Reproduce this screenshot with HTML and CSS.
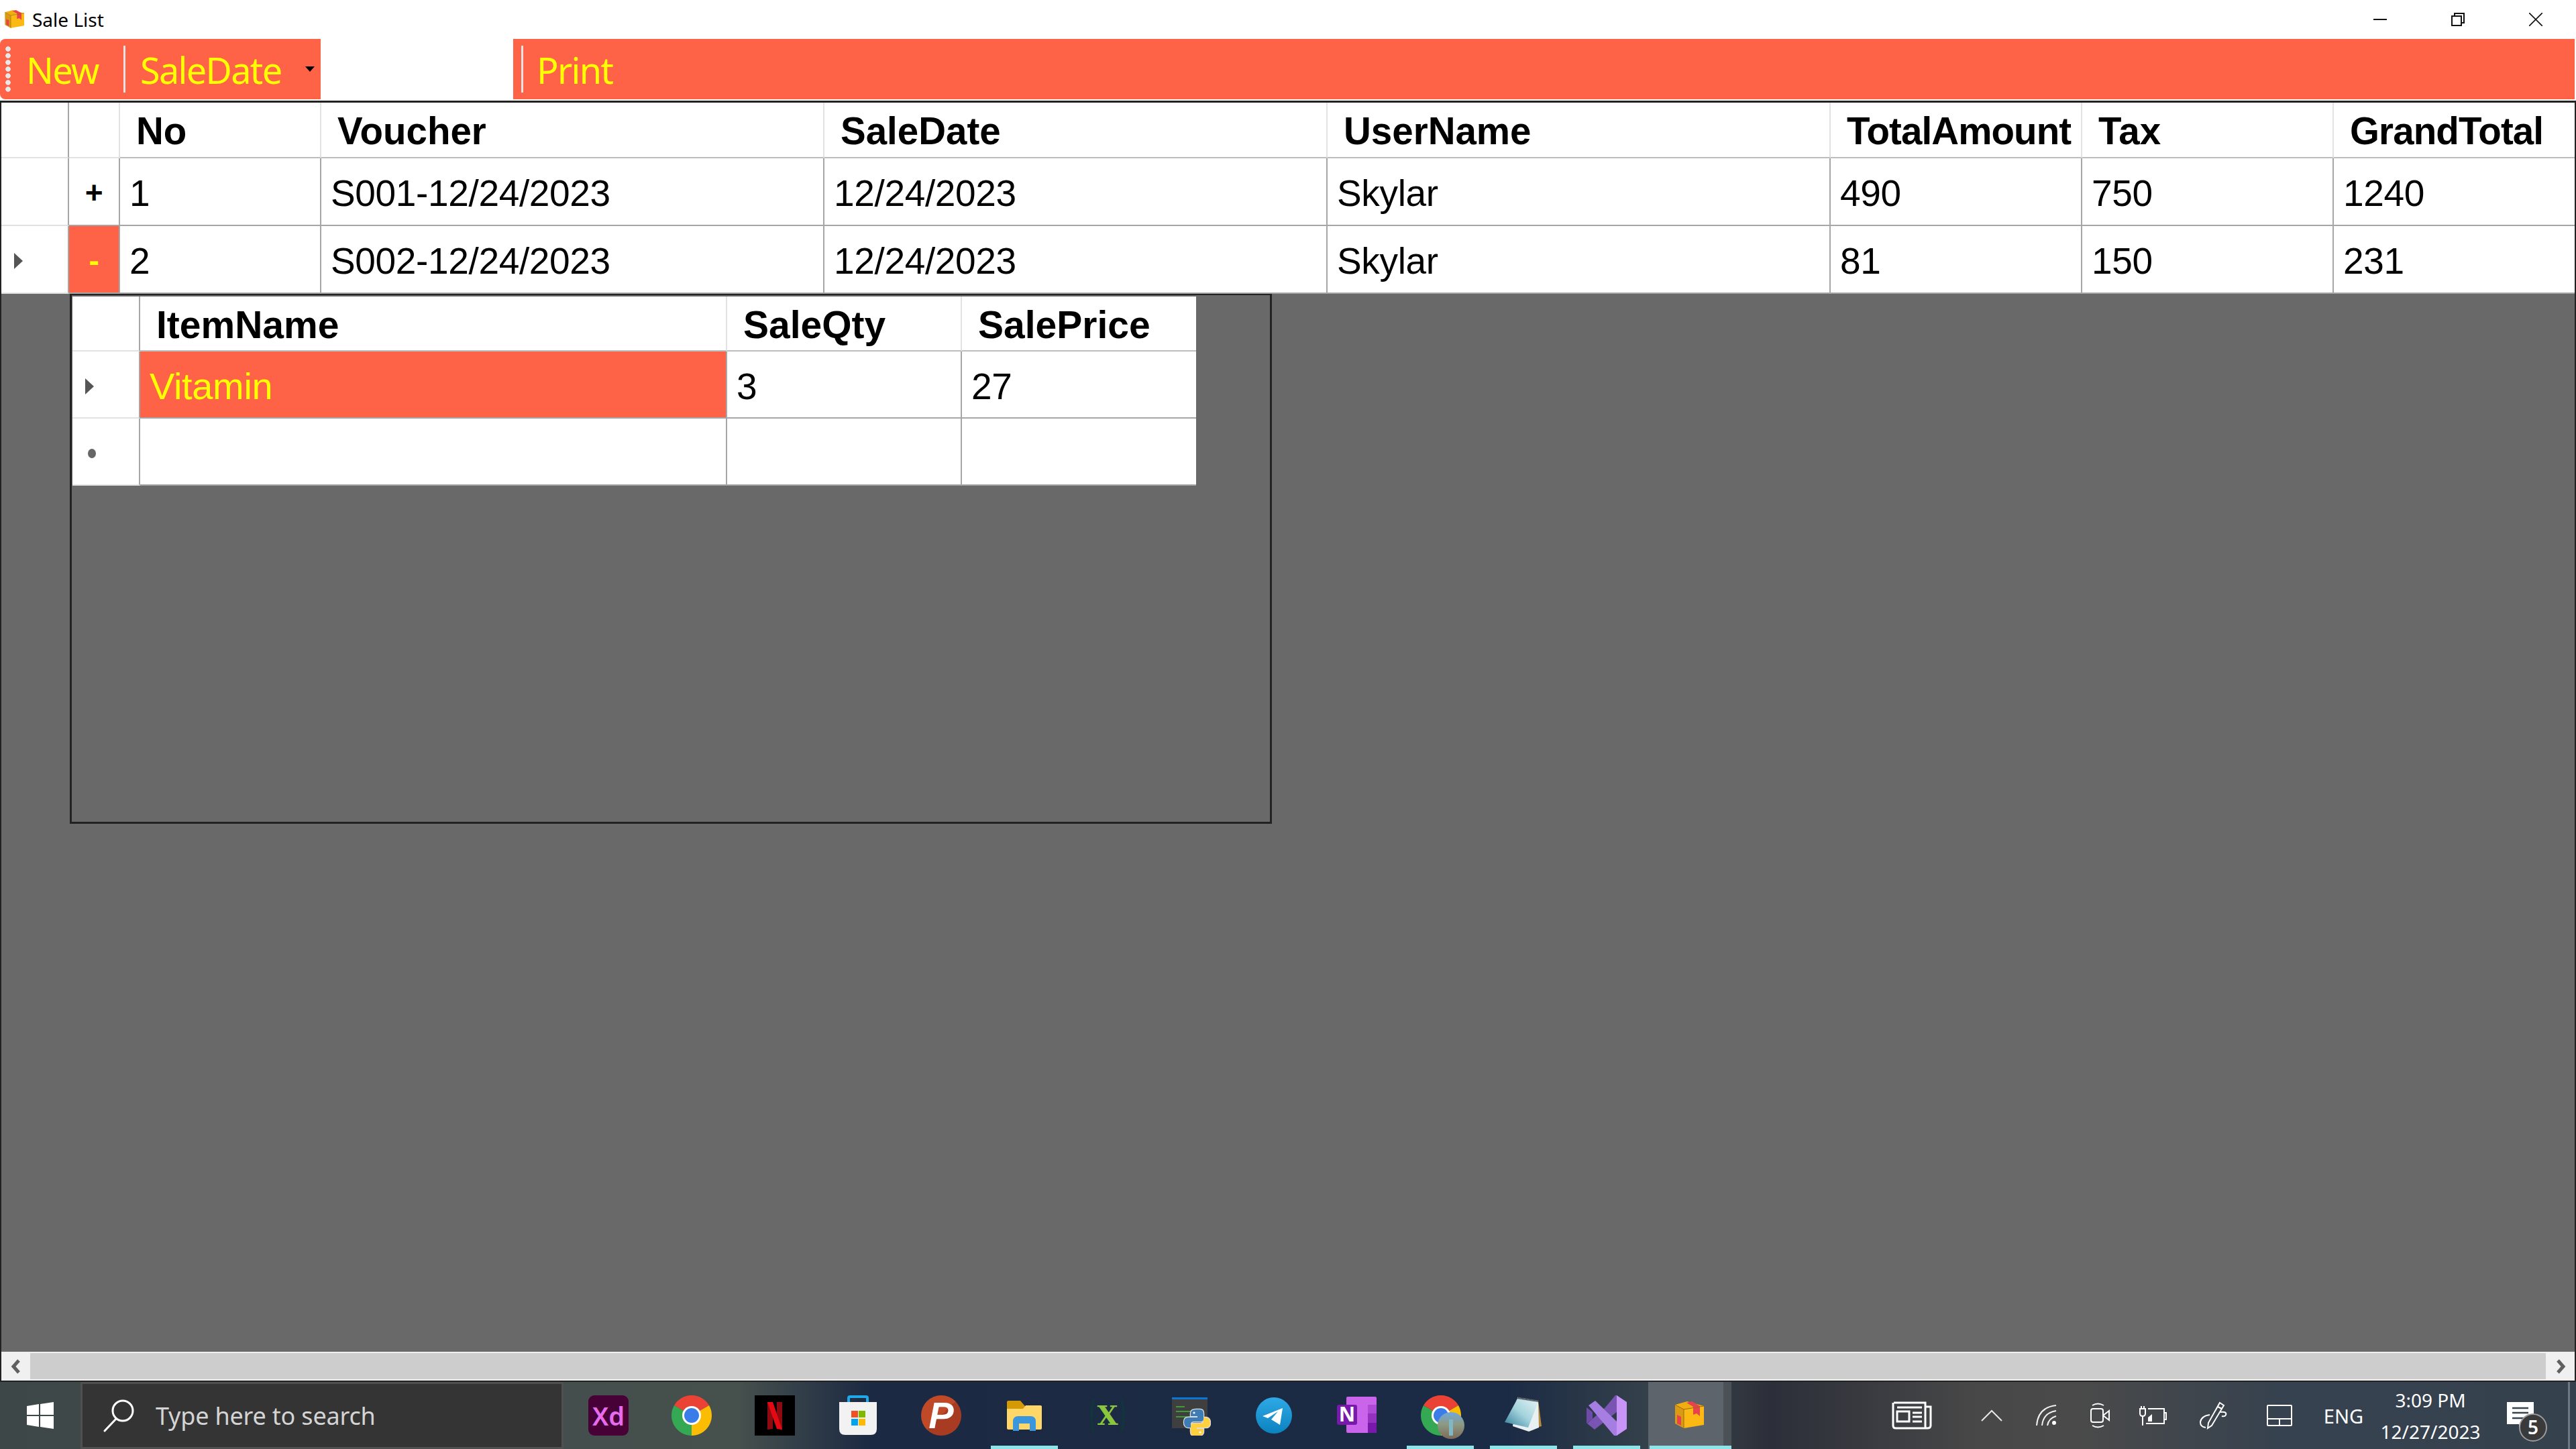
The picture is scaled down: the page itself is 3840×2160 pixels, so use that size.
FILE: index.html
```html
<!DOCTYPE html>
<html lang="en">

<head>
  <meta charset="UTF-8">
  <meta name="viewport" content="width=device-width, initial-scale=1.0">
  <title>Sale List</title>
  <link rel="stylesheet" href="styles.css">
</head>

<body>
  <svg class="defs" width="0" height="0" xmlns="http://www.w3.org/2000/svg">
    <symbol id="box-icon" viewBox="0 0 44 42">
      <path d="M0 5L13 12V40L0 33Z" fill="#d99a14" />
      <path d="M13 12L43 7V35L13 40Z" fill="#fdb913" />
      <path d="M0 5L18 0L43 7L13 12Z" fill="#f2ae10" />
      <path d="M17 2L25 0L37 7V22L32 18L27 20V8Z" fill="#e8434a" />
      <path d="M3 20L9 23V36L3 33Z" fill="#e8434a" />
      <path d="M0 5L13 12V40M13 12L43 7" stroke="#9a6a10" stroke-width="1" fill="none" />
    </symbol>
  </svg>

  <div class="screen">
    <div class="window">
      <div class="titlebar">
        <svg class="title-icon" width="30" height="28"><use href="#box-icon" /></svg>
        <span class="title-text">Sale List</span>
        <div class="window-buttons">
          <svg width="20" height="20" viewBox="0 0 20 20"><path d="M0 10H20" stroke="#111" stroke-width="2" /></svg>
          <svg width="20" height="20" viewBox="0 0 20 20" fill="none" stroke="#111" stroke-width="2"><rect x="1" y="5" width="14" height="14" /><path d="M5 5V1H19V15H15" /></svg>
          <svg width="20" height="20" viewBox="0 0 20 20"><path d="M0 0L20 20M20 0L0 20" stroke="#111" stroke-width="1.6" /></svg>
        </div>
      </div>

      <div class="toolbar">
        <div class="strip strip-left">
          <div class="grip"></div>
          <span class="tool tool-new">New</span>
          <div class="tool-sep"></div>
          <span class="tool tool-date">SaleDate</span>
          <div class="drop-arrow"></div>
        </div>
        <div class="date-box"></div>
        <div class="strip strip-right">
          <div class="tool-sep"></div>
          <span class="tool tool-print">Print</span>
        </div>
      </div>

      <div class="grid-view">
        <div class="master">
          <div class="row row-head">
            <div class="cell cell-side"></div>
            <div class="cell cell-side"></div>
            <div class="cell">No</div>
            <div class="cell">Voucher</div>
            <div class="cell">SaleDate</div>
            <div class="cell">UserName</div>
            <div class="cell cell-tight">TotalAmount</div>
            <div class="cell">Tax</div>
            <div class="cell cell-tight">GrandTotal</div>
          </div>
          <div class="row">
            <div class="cell cell-side"></div>
            <div class="cell cell-toggle">+</div>
            <div class="cell">1</div>
            <div class="cell">S001-12/24/2023</div>
            <div class="cell">12/24/2023</div>
            <div class="cell">Skylar</div>
            <div class="cell">490</div>
            <div class="cell">750</div>
            <div class="cell">1240</div>
          </div>
          <div class="row">
            <div class="cell cell-side"><span class="row-arrow"></span></div>
            <div class="cell cell-toggle cell-open">-</div>
            <div class="cell">2</div>
            <div class="cell">S002-12/24/2023</div>
            <div class="cell">12/24/2023</div>
            <div class="cell">Skylar</div>
            <div class="cell">81</div>
            <div class="cell">150</div>
            <div class="cell">231</div>
          </div>
        </div>

        <div class="detail-panel">
          <div class="detail">
            <div class="detail-row detail-head">
              <div class="cell cell-side"></div>
              <div class="cell">ItemName</div>
              <div class="cell">SaleQty</div>
              <div class="cell">SalePrice</div>
            </div>
            <div class="detail-row">
              <div class="cell cell-side"><span class="row-arrow"></span></div>
              <div class="cell cell-picked">Vitamin</div>
              <div class="cell">3</div>
              <div class="cell">27</div>
            </div>
            <div class="detail-row">
              <div class="cell cell-side"><span class="new-dot"></span></div>
              <div class="cell"></div>
              <div class="cell"></div>
              <div class="cell"></div>
            </div>
          </div>
        </div>
      </div>

      <div class="hscroll">
        <div class="scroll-btn">
          <svg width="18" height="22" viewBox="0 0 18 22"><path d="M13 2L5 11L13 20" fill="none" stroke="#606060" stroke-width="5" /></svg>
        </div>
        <div class="scroll-track"></div>
        <div class="scroll-btn">
          <svg width="18" height="22" viewBox="0 0 18 22"><path d="M5 2L13 11L5 20" fill="none" stroke="#606060" stroke-width="5" /></svg>
        </div>
      </div>
    </div>

    <div class="taskbar">
      <div class="start">
        <svg width="40" height="40" viewBox="0 0 40 40"><path d="M0 6L18 3V19H0ZM20 3L40 0V19H20ZM0 21H18V37L0 34ZM20 21H40V40L20 37Z" fill="#fff" /></svg>
      </div>
      <div class="search">
        <svg width="48" height="50" viewBox="0 0 48 50" fill="none" stroke="#fff" stroke-width="3"><circle cx="30" cy="18" r="15" /><path d="M20 30L3 48" stroke-linecap="round" /></svg>
        <span class="search-text">Type here to search</span>
      </div>

      <div class="apps">
        <div class="app"><div class="xd-icon">Xd</div></div>
        <div class="app">
          <svg width="60" height="60" viewBox="0 0 60 60"><path d="M30 30L4 15A30 30 0 0 1 56 15Z" fill="#ea4335" /><path d="M30 30L56 15A30 30 0 0 1 30 60Z" fill="#fbbc04" /><path d="M30 30L30 60A30 30 0 0 1 4 15Z" fill="#34a853" /><circle cx="30" cy="30" r="14" fill="#fff" /><circle cx="30" cy="30" r="11" fill="#3b7de8" /></svg>
        </div>
        <div class="app">
          <svg width="60" height="60" viewBox="0 0 60 60"><rect width="60" height="60" fill="#000" /><path d="M19 10H27V50L19 51Z" fill="#8f0a10" /><path d="M33 10H41V51L33 50Z" fill="#8f0a10" /><path d="M19 10H27L41 51L33 50Z" fill="#e50914" /></svg>
        </div>
        <div class="app">
          <svg width="60" height="60" viewBox="0 0 60 60"><path d="M16 14V4Q16 2 18 2H42Q44 2 44 4V14" fill="none" stroke="#1fa8ea" stroke-width="4" /><path d="M2 10H58V50Q58 59 49 59H11Q2 59 2 50Z" fill="#f2f2f2" /><rect x="20" y="23" width="10" height="10" fill="#f25022" /><rect x="31" y="23" width="10" height="10" fill="#7fba00" /><rect x="20" y="35" width="10" height="10" fill="#00a4ef" /><rect x="31" y="35" width="10" height="10" fill="#ffb900" /></svg>
        </div>
        <div class="app"><div class="psiphon-icon">P</div></div>
        <div class="app">
          <svg width="52" height="46" viewBox="0 0 52 46"><path d="M0 3Q0 1 2 1H20L27 9H52V15H0Z" fill="#d49a05" /><path d="M0 13H24L28 8H50Q52 8 52 10V42Q52 44 50 44H2Q0 44 0 42Z" fill="#ffd768" /><path d="M9 46V32Q9 24 17 24H35Q43 24 43 32V46H34V35H18V46Z" fill="#3a96dd" /></svg>
        </div>
        <div class="app">
          <svg width="60" height="60" viewBox="0 0 60 60"><path d="M9 6Q3 30 9 54M51 6Q57 30 51 54" fill="none" stroke="#12343d" stroke-width="4" /><text class="x-mark" x="30" y="44" text-anchor="middle">X</text></svg>
        </div>
        <div class="app">
          <svg width="60" height="60" viewBox="0 0 60 60"><rect x="2" y="3" width="53" height="46" fill="#3f3f3f" /><rect x="2" y="3" width="53" height="3" fill="#0a78d0" /><path d="M8 17H21M8 24H30M8 32H30" stroke="#3f9a3a" stroke-width="2" /><g stroke="#ddd" stroke-width="2.5" fill="none"><path d="M38 21Q30 21 30 27V31H40V33H26Q20 33 20 40Q20 47 26 48H30V43Q30 39 35 39H45Q49 39 49 35V27Q49 21 44 21Z" /><path d="M38 21Q30 21 30 27V31H40V33H26Q20 33 20 40Q20 47 26 48H30V43Q30 39 35 39H45Q49 39 49 35V27Q49 21 44 21Z" transform="rotate(180 39.5 40.5)" /></g><path d="M38 21Q30 21 30 27V31H40V33H26Q20 33 20 40Q20 47 26 48H30V43Q30 39 35 39H45Q49 39 49 35V27Q49 21 44 21Z" fill="#3d7cb4" /><path d="M38 21Q30 21 30 27V31H40V33H26Q20 33 20 40Q20 47 26 48H30V43Q30 39 35 39H45Q49 39 49 35V27Q49 21 44 21Z" fill="#ffd141" transform="rotate(180 39.5 40.5)" /><circle cx="35" cy="26" r="1.6" fill="#fff" /><circle cx="44" cy="55" r="1.6" fill="#fff" /></svg>
        </div>
        <div class="app">
          <svg width="54" height="54" viewBox="0 0 54 54"><defs><linearGradient id="tg" x1="0" y1="0" x2="0" y2="1"><stop offset="0" stop-color="#2fa9e5" /><stop offset="1" stop-color="#0a82bf" /></linearGradient></defs><circle cx="27" cy="27" r="27" fill="url(#tg)" /><path d="M10 28L40 16L36 41L23 33L33 21L18 31Z" fill="#fff" /></svg>
        </div>
        <div class="app">
          <svg width="60" height="60" viewBox="0 0 60 60"><rect x="14" y="2" width="45" height="54" rx="2" fill="#ca64ea" /><path d="M46 14H59V27H46Z" fill="#ae4bd5" /><path d="M46 27H59V41H46Z" fill="#9332bf" /><path d="M46 41H59V54Q59 56 57 56H46Z" fill="#7719aa" /><rect x="0" y="14" width="30" height="30" rx="3" fill="#7719aa" /><text class="note-n" x="15" y="39" text-anchor="middle">N</text></svg>
        </div>
        <div class="app">
          <svg class="chrome-badge" width="66" height="66" viewBox="0 0 66 66"><path d="M30 30L4 15A30 30 0 0 1 56 15Z" fill="#ea4335" /><path d="M30 30L56 15A30 30 0 0 1 30 60Z" fill="#fbbc04" /><path d="M30 30L30 60A30 30 0 0 1 4 15Z" fill="#34a853" /><circle cx="30" cy="30" r="14" fill="#fff" /><circle cx="30" cy="30" r="11" fill="#3b7de8" /><defs><linearGradient id="face" x1="0" y1="0" x2="0" y2="1"><stop offset="0" stop-color="#6ea8e0" /><stop offset="0.45" stop-color="#8c9a84" /><stop offset="1" stop-color="#7d6a58" /></linearGradient></defs><circle cx="45" cy="45" r="20" fill="url(#face)" /><path d="M42 36H48V60H42Z" fill="#7fb8c4" /></svg>
        </div>
        <div class="app">
          <svg width="56" height="56" viewBox="0 0 56 56"><defs><linearGradient id="pad" x1="0" y1="1" x2="1" y2="0"><stop offset="0" stop-color="#2f7c98" /><stop offset="0.5" stop-color="#a5d4dd" /><stop offset="1" stop-color="#e4f3f5" /></linearGradient></defs><path d="M50 6L55 44L48 46Z" fill="#b88a3c" /><path d="M18 4L50 8L51 46L36 52L12 44Z" fill="#e8f0f2" /><path d="M19 3L50 8L35 46L0 38Z" fill="url(#pad)" /><path d="M19 2L50 7" stroke="#999" stroke-width="3" stroke-dasharray="1 1" /></svg>
        </div>
        <div class="app">
          <svg width="60" height="60" viewBox="0 0 60 60"><path d="M0 18L9 25V35L0 42Z" fill="#6e4ba8" /><path d="M43 0H46V24L12 51L1 42L28 18Z" fill="#7a54b2" /><path d="M3 15L13 8L46 40V60L41 60Z" fill="#a67de0" /><path d="M45 0L60 10V50L45 60Z" fill="#c994f7" /></svg>
        </div>
        <div class="app app-active">
          <svg width="44" height="42"><use href="#box-icon" /></svg>
        </div>
      </div>

      <div class="tray">
        <div class="tray-item tray-news">
          <svg width="60" height="42" viewBox="0 0 60 42" fill="none" stroke="#fff" stroke-width="3"><path d="M3 2H50V38Q50 40 53 40H6Q2 40 2 36V2M50 8H58V36Q58 40 53 40" /><path d="M8 9H45M8 30H26V15H8ZM31 17H45M31 23H45M31 30H45" /></svg>
        </div>
        <div class="tray-item tray-chevron">
          <svg width="32" height="18" viewBox="0 0 32 18" fill="none" stroke="#e8e8e8" stroke-width="2"><path d="M1 17L16 2L31 17" /></svg>
        </div>
        <div class="tray-item tray-wifi">
          <svg width="32" height="32" viewBox="0 0 32 32" fill="none" stroke="#f0f0f0" stroke-width="2"><path d="M1 31Q3 4 30 1M9 31Q11 12 30 9M17 31Q19 20 30 17" /><circle cx="27" cy="27" r="3" fill="#fff" stroke="none" /></svg>
        </div>
        <div class="tray-item tray-cam">
          <svg width="30" height="38" viewBox="0 0 30 38" fill="none" stroke="#fff" stroke-width="2"><path d="M3 4Q11 -1 20 4M3 34Q11 39 20 34" /><rect x="1" y="9" width="18" height="20" rx="3" /><path d="M19 19L28 12V26Z" /></svg>
        </div>
        <div class="tray-item tray-battery">
          <svg width="42" height="30" viewBox="0 0 42 30" fill="none" stroke="#fff" stroke-width="2"><path d="M2 5H10V12Q10 16 6 16Q2 16 2 12ZM4 5V1M8 5V1M6 16V30" /><path d="M14 5H38V27H11M38 11H41V21H38" /><path d="M14 24V18L20 13V24Z" fill="#fff" stroke="none" /></svg>
        </div>
        <div class="tray-item tray-pen">
          <svg width="42" height="42" viewBox="0 0 42 42" fill="none" stroke="#fff" stroke-width="2"><path d="M30 2L36 6L18 36L12 40L13 32Z" /><path d="M27 8L33 11M31 16Q41 15 39 20Q38 23 33 22M15 20Q2 22 1 31Q1 38 9 39" /></svg>
        </div>
        <div class="tray-item tray-touch">
          <svg width="38" height="32" viewBox="0 0 38 32" fill="none" stroke="#fff" stroke-width="2"><rect x="1" y="1" width="36" height="30" rx="1" /><path d="M1 21H37M19 21V31" /></svg>
        </div>
        <div class="tray-item tray-lang">ENG</div>
        <div class="tray-item tray-clock">
          <span>3:09 PM</span>
          <span>12/27/2023</span>
        </div>
        <div class="tray-item tray-notify">
          <svg width="60" height="60" viewBox="0 0 60 60"><path d="M0 0H40V33H24L18 39V33H0Z" fill="#fff" /><path d="M8 9H32M8 16H32M8 24H26" stroke="#3a4450" stroke-width="2.5" /></svg>
          <span class="notify-badge">5</span>
        </div>
        <div class="tray-edge"></div>
      </div>
    </div>
  </div>
</body>

</html>
```

FILE: styles.css
```css
* {
  box-sizing: border-box;
}

body {
  margin: 0;
  font-family: "Liberation Sans", Arial, sans-serif;
}

.defs {
  display: block;
  height: 0;
}

.screen {
  width: 3840px;
  height: 2160px;
  display: flex;
  flex-direction: column;
  overflow: hidden;
}

.window {
  flex: 1;
  min-height: 0;
  display: flex;
  flex-direction: column;
  background: #fff;
}

/* title bar */
.titlebar {
  height: 58px;
  display: flex;
  align-items: center;
  padding-left: 7px;
}

.title-text {
  margin-left: 11px;
  font-family: "Noto Sans", sans-serif;
  font-size: 28px;
  color: #000;
}

.window-buttons {
  margin-left: auto;
  display: flex;
  gap: 96px;
  padding-right: 50px;
}

/* toolbar */
.toolbar {
  height: 90px;
  display: flex;
}

.strip {
  background: #ff6347;
  display: flex;
  align-items: center;
  position: relative;
}

.strip-left {
  width: 478px;
  border-radius: 8px 0 0 8px;
  padding-left: 8px;
}

.strip-right {
  flex: 1;
  padding-left: 12px;
  margin-right: 2px;
}

.date-box {
  width: 287px;
  background: #fff;
}

.grip {
  width: 8px;
  height: 68px;
  background: radial-gradient(circle at 4px 4px, #e8e8e8 3.5px, transparent 4px) 0 0 / 8px 10px;
}

.tool {
  font-family: "Noto Sans", sans-serif;
  font-size: 54px;
  letter-spacing: -1.7px;
  color: #ffff00;
  line-height: 90px;
  padding-top: 2px;
}

.tool-new {
  margin-left: 23px;
  width: 145px;
}

.tool-sep {
  width: 3px;
  height: 70px;
  background: #e4e4e4;
  flex-shrink: 0;
}

.tool-date {
  margin-left: 22px;
  width: 246px;
}

.tool-print {
  margin-left: 20px;
}

.drop-arrow {
  width: 0;
  height: 0;
  border-left: 7px solid transparent;
  border-right: 7px solid transparent;
  border-top: 8px solid #000;
}

/* grid */
.grid-view {
  flex: 1;
  min-height: 0;
  margin-top: 2px;
  background: #696969;
  border-top: 3px solid #222;
  border-left: 2px solid #222;
  border-right: 2px solid #222;
}

.row {
  display: grid;
  grid-template-columns: 101px 76px 300px 750px 750px 750px 375px 375px 1fr;
  height: 101px;
}

.row-head {
  height: 83px;
  font-weight: bold;
}

.cell {
  display: flex;
  align-items: center;
  padding-left: 14px;
  padding-top: 5px;
  font-size: 55px;
  letter-spacing: -0.35px;
  color: #000;
  background: #fff;
  border-right: 2px solid #a6a6a6;
  border-bottom: 2px solid #a6a6a6;
  overflow: hidden;
  white-space: nowrap;
}

.row > .cell:last-child,
.detail-row > .cell:last-child {
  border-right: none;
}

.row-head .cell,
.detail-head .cell {
  padding-left: 24px;
  padding-top: 3px;
  font-size: 56.5px;
  letter-spacing: 0;
  border-right-color: #e2e2e2;
  border-bottom-color: #bdbdbd;
}

.row-head .cell-tight {
  letter-spacing: -0.9px;
}

.detail-head .cell {
  font-size: 57px;
}

.row-head .cell:first-child,
.detail-head .cell:first-child {
  border-right-color: #a6a6a6;
}

.row .cell-side,
.detail-row .cell-side {
  padding-left: 0;
  justify-content: center;
  border-bottom-color: #e2e2e2;
}

.cell-toggle {
  padding-left: 0;
  padding-top: 3px;
  justify-content: center;
  font-weight: bold;
  font-size: 46px;
}

.cell-open {
  background: #ff6347;
  color: #ffff00;
}

.row-arrow {
  width: 0;
  height: 0;
  border-top: 12px solid transparent;
  border-bottom: 12px solid transparent;
  border-left: 13px solid #555;
  margin-right: 48px;
}

.new-dot {
  width: 12px;
  height: 14px;
  border-radius: 50%;
  background: #666;
  margin-right: 42px;
}

.detail-panel {
  width: 1792px;
  height: 791px;
  margin-left: 102px;
  margin-top: -1px;
  padding: 2px 0 0 1px;
  border: 3px solid #222;
  background: #696969;
}

.detail {
  width: 1675px;
}

.detail-row {
  display: grid;
  grid-template-columns: 101px 875px 350px 349px;
  height: 100px;
}

.detail-head {
  height: 82px;
  font-weight: bold;
}

.detail-row .cell:last-child {
  border-right: none;
}

.cell-picked {
  background: #ff6347;
  color: #ffff00;
  font-size: 56px;
}

/* scrollbar */
.hscroll {
  height: 45px;
  display: flex;
  background: #f0f0f0;
  border-left: 2px solid #222;
  border-right: 2px solid #222;
  border-bottom: 2px solid #222;
}

.scroll-btn {
  width: 43px;
  display: flex;
  align-items: center;
  justify-content: center;
}

.scroll-track {
  flex: 1;
  background: #cdcdcd;
  margin: 2px 0;
}

/* taskbar */
.taskbar {
  height: 100px;
  display: flex;
  background: linear-gradient(90deg, #3e4747 0, #46504d 1100px, #1b2942 1300px, #1c2b45 2250px, #3a454b 2500px, #2c2f39 2640px, #484848 2950px, #4a4a4a 3100px, #36424f 3400px, #35414d 3840px);
}

.start {
  width: 120px;
  display: flex;
  align-items: center;
  justify-content: center;
  padding-right: 1px;
}

.search {
  width: 720px;
  display: flex;
  align-items: center;
  padding-left: 30px;
  background: #343434;
  border: 3px solid #505050;
}

.search-text {
  margin-left: 31px;
  font-family: "Noto Sans", sans-serif;
  font-size: 36px;
  letter-spacing: -0.2px;
  color: #d4d4d4;
}

.apps {
  display: flex;
  margin-left: 5px;
}

.app {
  width: 124px;
  display: flex;
  align-items: center;
  justify-content: center;
  position: relative;
}

.app:nth-child(6)::after,
.app:nth-child(11)::after,
.app:nth-child(12)::after,
.app:nth-child(13)::after,
.app:nth-child(14)::after {
  content: "";
  position: absolute;
  left: 12px;
  right: 12px;
  bottom: 0;
  height: 5px;
  background: #8de5ea;
}

.app-active {
  background: #5d646b;
  box-shadow: inset -12px 0 0 #4c5158;
}

.app-active::after {
  left: 2px !important;
  right: 0 !important;
}

.chrome-badge {
  margin: 6px 0 0 8px;
}

.xd-icon {
  width: 60px;
  height: 60px;
  border-radius: 9px;
  background: #470137;
  color: #e76ced;
  font-family: "Noto Sans", sans-serif;
  font-size: 38px;
  font-weight: 600;
  text-align: center;
  line-height: 60px;
}

.psiphon-icon {
  width: 60px;
  height: 60px;
  border-radius: 50%;
  background: linear-gradient(135deg, #c04a28 50%, #a83c22 50%);
  color: #fff;
  font-size: 56px;
  font-weight: bold;
  font-style: italic;
  text-align: center;
  line-height: 60px;
}

.x-mark {
  font-family: "DejaVu Serif", serif;
  font-size: 40px;
  font-weight: bold;
  fill: #8cc63f;
}

.note-n {
  font-family: "Noto Sans", sans-serif;
  font-size: 30px;
  font-weight: bold;
  fill: #fff;
}

.tray {
  margin-left: auto;
  width: 1060px;
  display: flex;
  position: relative;
}

.tray-item {
  display: flex;
  align-items: center;
  justify-content: center;
  color: #fff;
  font-family: "Noto Sans", sans-serif;
}

.tray-news {
  width: 140px;
}

.tray-chevron {
  width: 98px;
}

.tray-wifi {
  width: 66px;
}

.tray-cam {
  width: 94px;
}

.tray-battery {
  width: 62px;
}

.tray-pen {
  width: 120px;
}

.tray-touch {
  width: 76px;
}

.tray-lang {
  width: 112px;
  padding-left: 3px;
  font-size: 29px;
}

.tray-clock {
  width: 150px;
  flex-direction: column;
  gap: 9px;
  font-size: 28px;
  line-height: 38px;
}

.tray-notify {
  width: 130px;
  position: relative;
  justify-content: flex-start;
  padding-left: 39px;
  padding-top: 20px;
}

.notify-badge {
  position: absolute;
  left: 57px;
  top: 47px;
  width: 42px;
  height: 42px;
  border-radius: 50%;
  background: #3a3a3a;
  border: 2px solid #9a9a9a;
  color: #fff;
  font-size: 28px;
  font-weight: 600;
  text-align: center;
  line-height: 36px;
}

.tray-edge {
  width: 3px;
  background: #6f7780;
}
```
